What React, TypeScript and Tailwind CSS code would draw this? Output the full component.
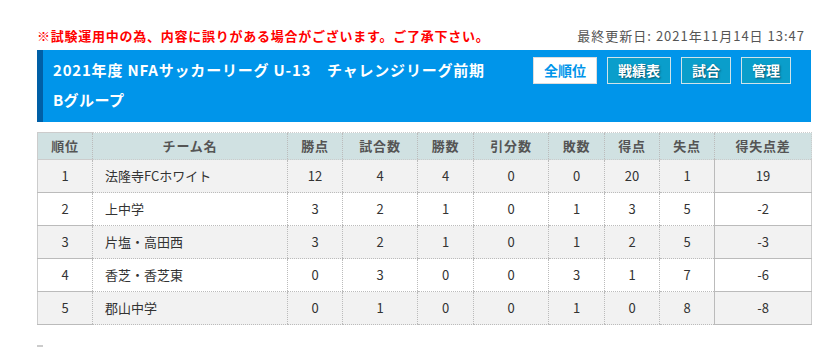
import React from "react";

const rows = [
  ["1", "法隆寺FCホワイト", "12", "4", "4", "0", "0", "20", "1", "19"],
  ["2", "上中学", "3", "2", "1", "0", "1", "3", "5", "-2"],
  ["3", "片塩・高田西", "3", "2", "1", "0", "1", "2", "5", "-3"],
  ["4", "香芝・香芝東", "0", "3", "0", "0", "3", "1", "7", "-6"],
  ["5", "郡山中学", "0", "1", "0", "0", "1", "0", "8", "-8"],
];
const heads = ["順位", "チーム名", "勝点", "試合数", "勝数", "引分数", "敗数", "得点", "失点", "得失点差"];
const widths = [55, 195, 55, 75, 56, 75, 56, 55, 55, 97];

export default function App() {
  const font = { fontFamily: '"Noto Sans CJK JP", "Noto Sans", sans-serif' };
  return (
    <div className="w-[828px] h-[347px] bg-white overflow-hidden" style={font}>
      <div className="ml-[37px] w-[774px] pt-[27px]">
        <div className="flex justify-between items-center h-[18px] pr-[6px]">
          <span className="text-[13px] font-bold text-[#ff0000] leading-[18px] tracking-[0.75px] whitespace-nowrap">
            ※試験運用中の為、内容に誤りがある場合がございます。ご了承下さい。
          </span>
          <span className="text-[13px] text-[#555] leading-[18px] tracking-[1px] whitespace-nowrap">最終更新日: 2021年11月14日 13:47</span>
        </div>
        <div className="mt-[5px] flex bg-[#0095ea] border-l-[6px] border-[#005fa6] h-[72px]">
          <div className="flex-1 pl-[10px] pt-[5px] text-white font-bold text-[15px] leading-[30px]">
            <div className="tracking-[0.8px] whitespace-nowrap">2021年度 NFAサッカーリーグ U-13　チャレンジリーグ前期</div>
            <div className="tracking-[0.4px]">Bグループ</div>
          </div>
          <div className="flex gap-[10px] pt-[7px] pr-[20px] items-start">
            <div className="w-[64px] h-[27px] flex items-center justify-center bg-white border border-[#ddd] text-[#0095ea] font-bold text-[14px]">
              全順位
            </div>
            {[
              ["戦績表", "w-[64px]"],
              ["試合", "w-[50px]"],
              ["管理", "w-[50px]"],
            ].map(([t, w]) => (
              <div
                key={t}
                className={`${w} h-[27px] flex items-center justify-center bg-[#0a9ecb] border border-[#cfe3ea] text-white font-bold text-[14px] [text-shadow:1px_1px_2px_rgba(0,0,0,0.5)]`}
              >
                {t}
              </div>
            ))}
          </div>
        </div>
        <table className="mt-[10px] w-[774px] border-collapse table-fixed text-[13px] text-[#333]">
          <colgroup>
            {widths.map((w, i) => (
              <col key={i} style={{ width: w }} />
            ))}
          </colgroup>
          <thead>
            <tr className="bg-[#d0e1e2] h-[27px]">
              {heads.map((h, i) => (
                <th
                  key={h}
                  className={`font-bold text-[#555] text-center tracking-[0.8px] border-t border-t-[#ccc] border-b border-b-[#ccc] ${i === 0 ? "border-l border-l-[#ccc]" : "border-l border-dotted border-l-[#bbb]"} ${i === 9 ? "border-r border-r-[#ccc]" : ""}`}
                >
                  {h}
                </th>
              ))}
            </tr>
          </thead>
          <tbody>
            {rows.map((r, ri) => (
              <tr key={ri} className={`h-[33px] ${ri % 2 === 0 ? "bg-[#f2f2f2]" : "bg-white"}`}>
                {r.map((c, ci) => (
                  <td
                    key={ci}
                    className={`border-b border-dotted border-b-[#bbb] ${ci === 0 ? "border-l border-solid border-l-[#ccc]" : "border-l border-dotted border-l-[#bbb]"} ${ci === 9 ? "border-r border-solid border-r-[#ccc]" : ""} ${ci === 1 ? "text-left pl-[12px]" : "text-center"}`}
                  >
                    {c}
                  </td>
                ))}
              </tr>
            ))}
          </tbody>
        </table>
        <div className="mt-[20px] w-[6px] h-[2px] bg-[#ccc]" />
      </div>
    </div>
  );
}
